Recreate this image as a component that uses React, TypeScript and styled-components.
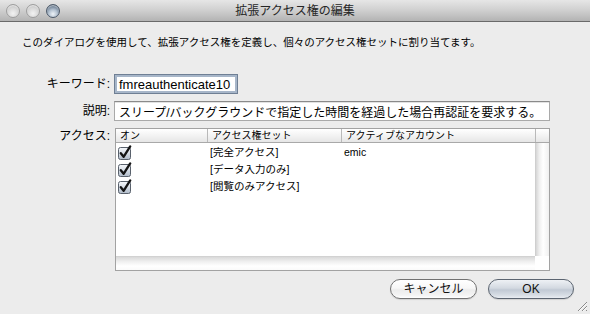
import React from "react"
import styled, { createGlobalStyle } from "styled-components"

const jp = `"Liberation Sans", "Noto Sans CJK JP", sans-serif`

const GlobalStyle = createGlobalStyle`
  html, body {
    margin: 0;
    padding: 0;
    background: #ececec;
  }
  * {
    box-sizing: border-box;
  }
`

const Window = styled.div`
  position: relative;
  width: 590px;
  height: 314px;
  display: flex;
  flex-direction: column;
  background: #ececec;
  font-family: ${jp};
  color: #000;
  overflow: hidden;
`

const TitleBar = styled.div`
  position: relative;
  height: 22px;
  display: flex;
  align-items: center;
  justify-content: center;
  background: linear-gradient(#e6e6e6, #cfcfcf 50%, #b3b3b3);
  border-bottom: 1px solid #6a6a6a;
`

const Lights = styled.div`
  position: absolute;
  left: 6px;
  top: 4px;
  display: flex;
  gap: 6px;
`

const Light = styled.div<{ $zoom?: boolean }>`
  width: 14px;
  height: 14px;
  border-radius: 50%;
  border: 1px solid ${(p) => (p.$zoom ? "#4d5a6a" : "#9e9e9e")};
  background: ${(p) =>
    p.$zoom
      ? "radial-gradient(circle at 50% 75%, #eef3f8 0%, #b3c1d0 40%, #687a8f 75%, #3c4756 100%)"
      : "radial-gradient(circle at 50% 70%, #f2f2f2 0%, #d8d8d8 50%, #b6b6b6 100%)"};
  box-shadow: inset 0 1px 1px rgba(255, 255, 255, 0.6);
`

const Title = styled.div`
  font-size: 12px;
  line-height: 14px;
  color: #262626;
`

const Content = styled.div`
  flex: 1;
  display: flex;
  flex-direction: column;
`

const Intro = styled.p`
  margin: 0;
  padding: 13px 0 0 22px;
  font-size: 10.5px;
  line-height: 14px;
`

const Form = styled.div`
  display: grid;
  grid-template-columns: 110px 436px;
  column-gap: 4px;
  row-gap: 7px;
  margin-top: 25px;
`

const Label = styled.div<{ $top?: boolean }>`
  font-size: 12px;
  line-height: 14px;
  text-align: right;
  align-self: ${(p) => (p.$top ? "start" : "center")};
  padding-top: ${(p) => (p.$top ? "1px" : "0")};
  padding-bottom: ${(p) => (p.$top ? "0" : "1px")};
`

const TextField = styled.div<{ $focused?: boolean; $width?: number }>`
  height: 20px;
  width: ${(p) => (p.$width ? `${p.$width}px` : "100%")};
  background: #fff;
  display: flex;
  align-items: center;
  padding-left: 4px;
  white-space: nowrap;
  overflow: hidden;
  font-size: ${(p) => (p.$focused ? "13px" : "12px")};
  border: 1px solid ${(p) => (p.$focused ? "#6f7f94" : "#a9a9a9")};
  border-top-color: ${(p) => (p.$focused ? "#6f7f94" : "#8a8a8a")};
  box-shadow: ${(p) =>
    p.$focused ? "inset 0 0 0 2px #a7b6c9" : "inset 0 1px 0 #e2e2e2"};
`

const Table = styled.div`
  margin-left: 1px;
  width: 435px;
  height: 143px;
  border: 1px solid #a2a2a2;
  background: #fff;
  display: grid;
  grid-template-columns: 419px 14px;
  grid-template-rows: 14px 113px 14px;
`

const Header = styled.div`
  grid-column: 1 / 3;
  display: flex;
  background: linear-gradient(#ffffff, #f3f3f3 50%, #e6e6e6);
  border-bottom: 1px solid #a9a9a9;
`

const HeadCell = styled.div<{ $w?: number }>`
  width: ${(p) => (p.$w ? `${p.$w}px` : "auto")};
  flex: ${(p) => (p.$w ? "none" : "1")};
  border-right: ${(p) => (p.$w ? "1px solid #b9b9b9" : "none")};
  padding-left: 4px;
  font-size: 10px;
  line-height: 13px;
  white-space: nowrap;
  overflow: hidden;
`

const Rows = styled.div`
  display: flex;
  flex-direction: column;
  padding-top: 1px;
`

const Row = styled.div`
  height: 17px;
  display: grid;
  grid-template-columns: 92px 134px 193px;
  align-items: center;
`

const Cell = styled.div`
  padding-left: 2px;
  font-size: 10.5px;
  line-height: 13px;
  white-space: nowrap;
`

const CheckCell = styled.div`
  padding-left: 1px;
  display: flex;
  align-items: center;
  height: 17px;
`

const VTrack = styled.div`
  background: linear-gradient(to right, #d6d6d6, #efefef 25%, #ffffff 55%, #f0f0f0);
  border-left: 1px solid #cfcfcf;
`

const HTrack = styled.div`
  background: linear-gradient(#d9d9d9, #efefef 35%, #ffffff 70%, #fafafa);
  border-top: 1px solid #d2d2d2;
`

const Corner = styled.div`
  background: #fff;
`

const Buttons = styled.div`
  display: flex;
  justify-content: flex-end;
  gap: 11px;
  padding: 8px 16px 0 0;
`

const Button = styled.div<{ $default?: boolean; $w: number }>`
  width: ${(p) => p.$w}px;
  height: 20px;
  border-radius: 10px;
  display: flex;
  align-items: center;
  justify-content: center;
  font-size: 12px;
  line-height: 14px;
  color: #111;
  border: 1px solid ${(p) => (p.$default ? "#5b6470" : "#727272")};
  background: ${(p) =>
    p.$default
      ? "linear-gradient(#eef1f5, #d3d9e1 45%, #c1c9d4 55%, #d8dee5 85%, #e9edf2)"
      : "linear-gradient(#ffffff, #f7f7f7 45%, #ececec 55%, #f4f4f4 85%, #ffffff)"};
  box-shadow: 0 1px 1px rgba(0, 0, 0, 0.12);
`

const Grip = styled.svg`
  position: absolute;
  right: 2px;
  bottom: 2px;
`

const CheckBox = () => (
  <svg width="16" height="16" viewBox="0 0 16 16">
    <defs>
      <linearGradient id="cbfill" x1="0" y1="0" x2="0" y2="1">
        <stop offset="0" stopColor="#f6f8fb" />
        <stop offset="0.5" stopColor="#d5dce5" />
        <stop offset="1" stopColor="#aeb9c7" />
      </linearGradient>
    </defs>
    <rect x="1.5" y="2.5" width="12" height="12" rx="2" fill="url(#cbfill)" stroke="#59616c" />
    <path d="M3.8 8.2 L6.6 11.8 L13.2 1.4" fill="none" stroke="#141414" strokeWidth="2.3" strokeLinecap="round" strokeLinejoin="round" />
  </svg>
)

const rows = [
  { set: "[完全アクセス]", account: "emic" },
  { set: "[データ入力のみ]", account: "" },
  { set: "[閲覧のみアクセス]", account: "" },
]

export default function App() {
  return (
    <Window>
      <GlobalStyle />
      <TitleBar>
        <Lights>
          <Light />
          <Light />
          <Light $zoom />
        </Lights>
        <Title>拡張アクセス権の編集</Title>
      </TitleBar>
      <Content>
        <Intro>
          このダイアログを使用して、拡張アクセス権を定義し、個々のアクセス権セットに割り当てます。
        </Intro>
        <Form>
          <Label>キーワード:</Label>
          <TextField $focused $width={124}>fmreauthenticate10</TextField>
          <Label>説明:</Label>
          <TextField>スリープ/バックグラウンドで指定した時間を経過した場合再認証を要求する。</TextField>
          <Label $top>アクセス:</Label>
          <Table>
            <Header>
              <HeadCell $w={92}>オン</HeadCell>
              <HeadCell $w={134}>アクセス権セット</HeadCell>
              <HeadCell $w={194}>アクティブなアカウント</HeadCell>
              <HeadCell />
            </Header>
            <Rows>
              {rows.map((r) => (
                <Row key={r.set}>
                  <CheckCell>
                    <CheckBox />
                  </CheckCell>
                  <Cell>{r.set}</Cell>
                  <Cell>{r.account}</Cell>
                </Row>
              ))}
            </Rows>
            <VTrack />
            <HTrack />
            <Corner />
          </Table>
        </Form>
        <Buttons>
          <Button $w={87}>キャンセル</Button>
          <Button $w={86} $default>OK</Button>
        </Buttons>
      </Content>
      <Grip width="13" height="13" viewBox="0 0 13 13">
        <path d="M12 3 L3 12 M12 7 L7 12 M12 11 L11 12" stroke="#8a8a8a" strokeWidth="1" />
        <path d="M12 4 L4 12 M12 8 L8 12" stroke="#fafafa" strokeWidth="1" />
      </Grip>
    </Window>
  )
}
